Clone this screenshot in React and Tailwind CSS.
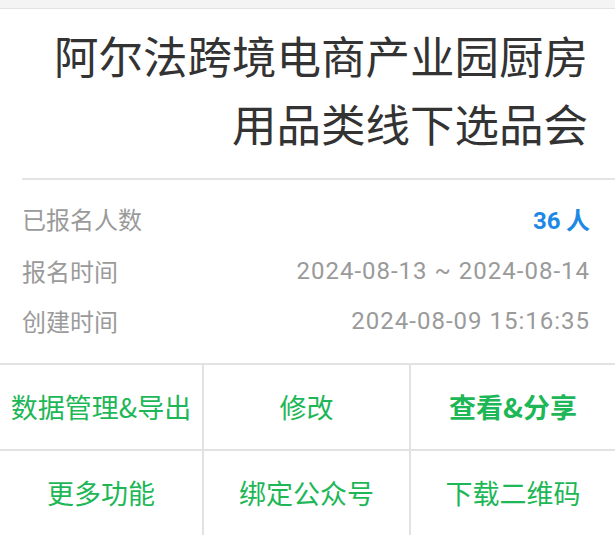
import React from "react";

const actions = [
  { label: "数据管理&导出" },
  { label: "修改" },
  { label: "查看&分享", bold: true },
  { label: "更多功能" },
  { label: "绑定公众号" },
  { label: "下载二维码" },
];

const App = () => {
  return (
    <div
      className="w-[615px] h-[535px] overflow-hidden bg-white"
      style={{ fontFamily: '"Noto Sans CJK SC", "Noto Sans", sans-serif' }}
    >
      {/* top strip */}
      <div className="h-[9px] bg-[#f4f4f4] border-b border-[#e3e3e3]"></div>

      {/* title */}
      <div className="pt-[12px] pb-[21px] pl-[40px] pr-[27px] text-right text-[44.5px] leading-[68px] text-[#333]">
        阿尔法跨境电商产业园厨房用品类线下选品会
      </div>

      <div className="ml-[22px] h-[2px] bg-[#e4e4e4]"></div>

      {/* info rows */}
      <div className="pt-[14px] pb-[17px] pl-[22px] pr-[25px] text-[24px] leading-[50px] text-[#9a9a9a]">
        <div className="flex justify-between">
          <span>已报名人数</span>
          <span className="font-bold text-[#1e88e5]">
            <span style={{ fontFamily: "Roboto, sans-serif" }}>36</span> 人
          </span>
        </div>
        <div className="flex justify-between">
          <span>报名时间</span>
          <span className="tracking-[1px]" style={{ fontFamily: "Roboto, sans-serif" }}>
            2024-08-13 ~ 2024-08-14
          </span>
        </div>
        <div className="flex justify-between">
          <span>创建时间</span>
          <span className="tracking-[1px]" style={{ fontFamily: "Roboto, sans-serif" }}>
            2024-08-09 15:16:35
          </span>
        </div>
      </div>

      {/* action grid */}
      <div className="grid grid-cols-[204px_207px_1fr] border-t-2 border-[#e2e2e2]">
        {actions.map((a, i) => (
          <div
            key={i}
            className={`h-[86px] flex items-center justify-center text-[27px] text-[#1db757] border-b-2 border-[#e2e2e2] ${
              i % 3 !== 2 ? "border-r-2" : ""
            } ${a.bold ? "font-bold" : ""}`}
          >
            {a.label}
          </div>
        ))}
      </div>
    </div>
  );
};

export default App;
